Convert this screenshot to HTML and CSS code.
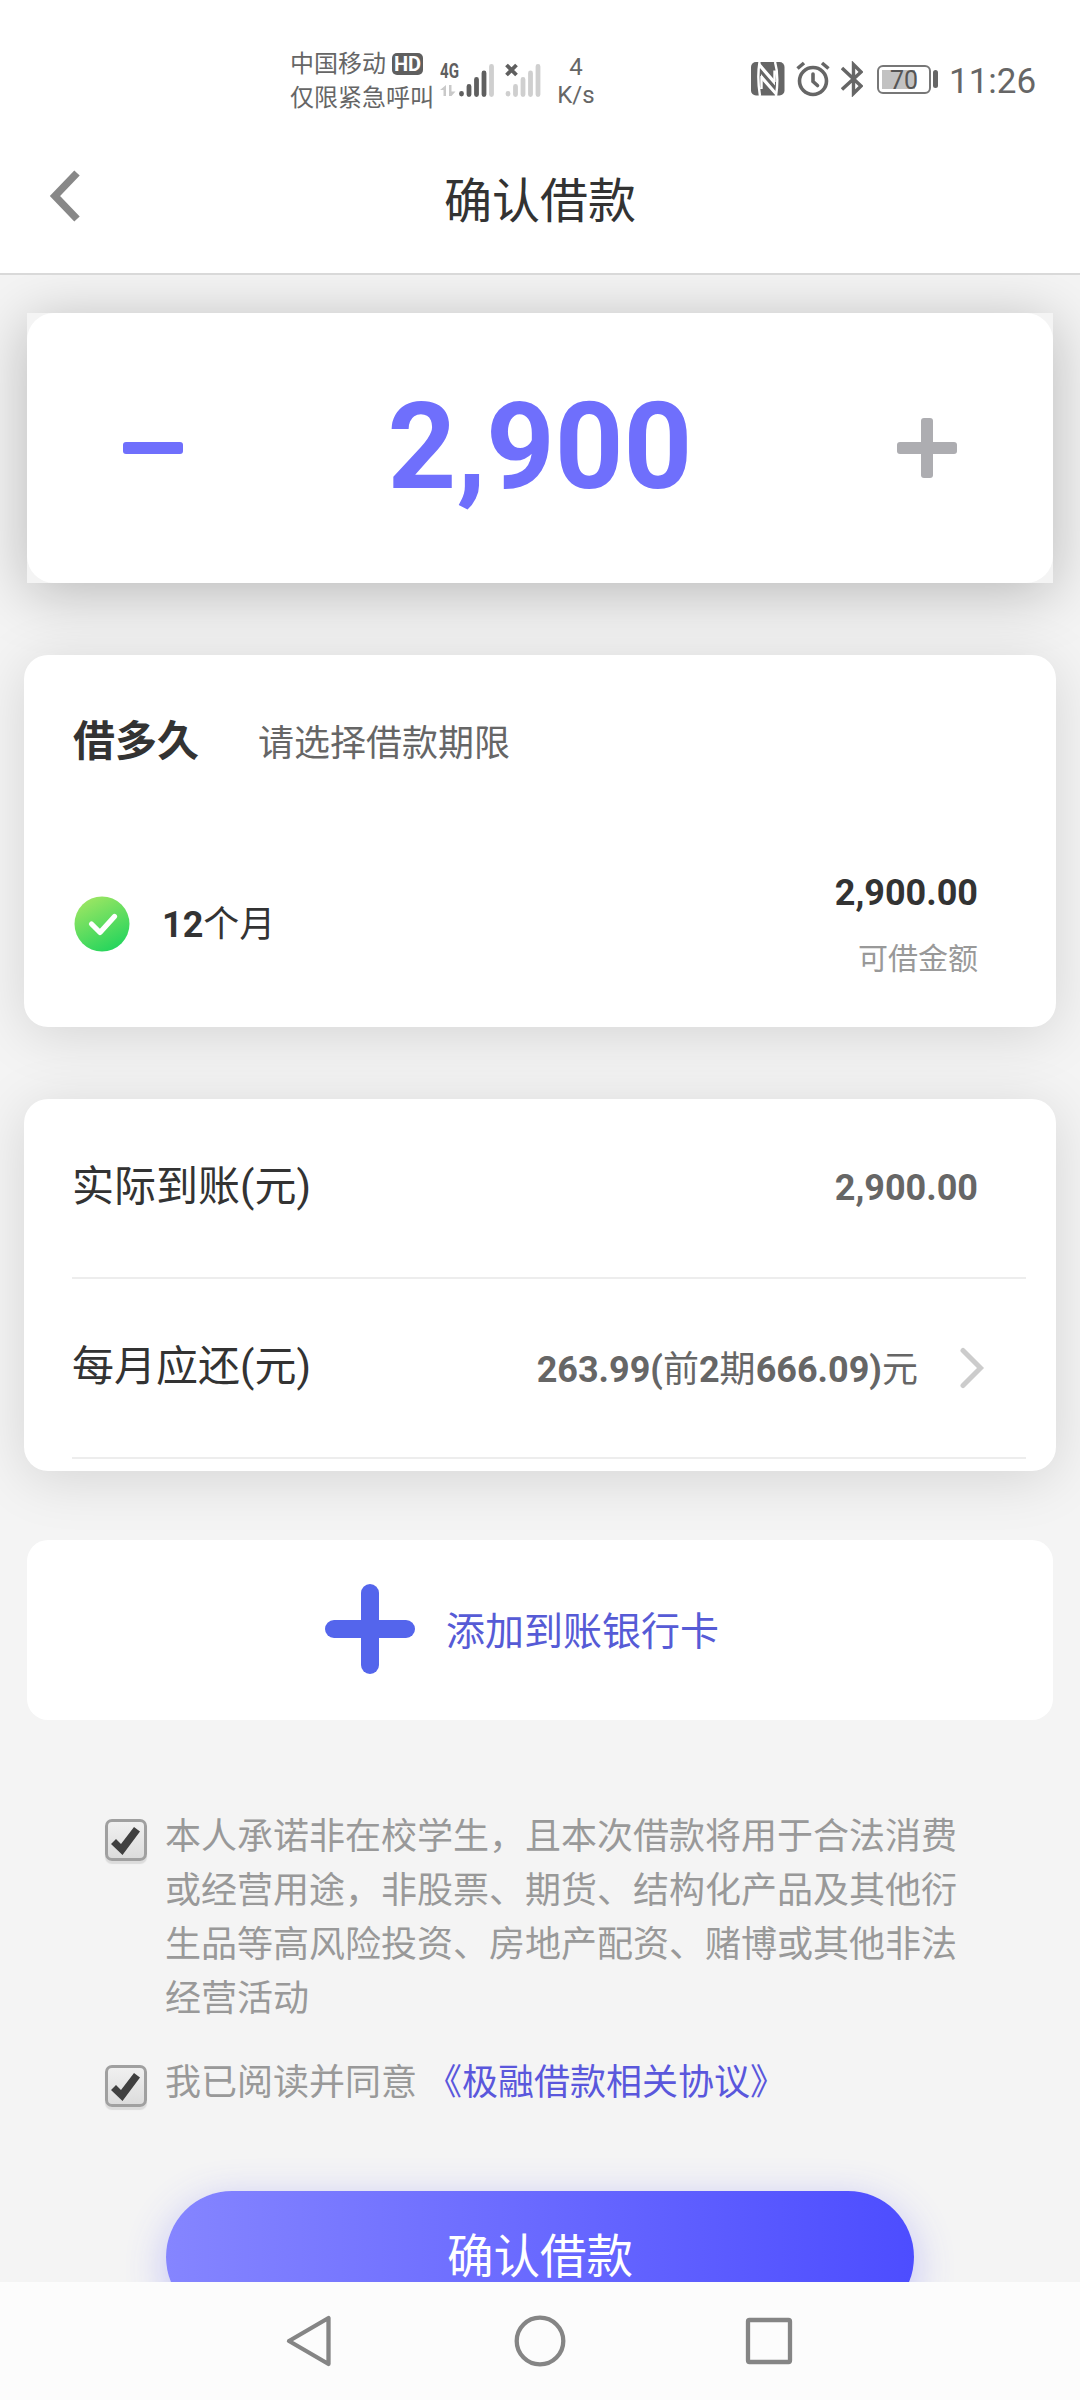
FILE: index.html
```html
<!DOCTYPE html>
<html lang="zh-CN">
<head>
<meta charset="utf-8">
<title>确认借款</title>
<link rel="stylesheet" href="styles.css">
</head>
<body>
<div class="screen">
  <header class="top">
    <div class="status">
      <div class="carrier">
        <div class="carrier-line">中国移动<span class="hd">HD</span></div>
        <div class="carrier-line">仅限紧急呼叫</div>
      </div>
      <svg class="signal" width="102" height="36" viewBox="0 0 102 36">
        <g fill="none" stroke-linecap="round" stroke-width="4.8">
          <path stroke="#5f5f5f" d="M21.500 31.500v.5M29 24.500v8M36.500 17.500v15M44 11v21.500"/>
          <path stroke="#cfcfcf" d="M51.500 4.500v28M68 31.500v.5M75.500 24.500v8M83 17.500v15M90.500 11v21.500M98 4.500v28"/>
        </g>
        <path stroke="#5f5f5f" stroke-width="3.800" fill="none" d="M66.500 3l10 10M76.500 3l-10 10"/>
        <path fill="#c9c9c9" d="M6 23v11H3.500v-6H0zM9 23v11h2.500l4-4.500h-4V23z"/>
        <text class="net" x="0" y="16" textLength="19" lengthAdjust="spacingAndGlyphs">4G</text>
      </svg>
      <div class="speed"><span>4</span><span>K/s</span></div>
      <div class="status-right">
        <svg width="34" height="34" viewBox="0 0 34 34">
          <rect width="33.500" height="33.500" rx="5" fill="#666"/>
          <path fill="none" stroke="#fff" stroke-width="2.400" d="M9 34C7 22 6.500 12 8.500 0M23.500 20V8.500M10.500 14v13M24 0c3 10 2.500 24 1 34"/>
          <path fill="#fff" d="M8 0l16 18.500v5L8.500 5.500zM10 12l15 17.500V34L10 17z"/>
        </svg>
        <svg width="34" height="36" viewBox="0 0 34 36" fill="none" stroke="#666" stroke-width="3.600">
          <circle cx="17" cy="20" r="13.500"/><path stroke-linecap="round" d="M17 13v7.500l4.500 4"/>
          <path d="M1.500 7.500L8 2M32.500 7.500L26 2"/>
        </svg>
        <svg width="22" height="36" viewBox="0 0 22 36" fill="none" stroke="#666" stroke-width="3.400">
          <path d="M1 7l19 18-7.500 7.500V3.500L20 11 1 28.500"/>
        </svg>
        <div class="battery"><span class="level"></span><span class="percent">70</span></div>
        <span class="nub"></span>
        <span class="clock">11:26</span>
      </div>
    </div>
    <div class="bar">
      <svg class="back" width="36" height="52" viewBox="0 0 36 52"><path fill="none" stroke="#888" stroke-width="7.500" d="M30 3L8 26l22 23"/></svg>
      <h1>确认借款</h1>
    </div>
  </header>

  <main class="content">
    <div class="amount-wrap">
      <section class="amount">
        <svg width="60" height="60" viewBox="0 0 60 60"><rect y="24" width="60" height="12" rx="3" fill="#6f6ffc"/></svg>
        <strong>2,900</strong>
        <svg width="60" height="60" viewBox="0 0 60 60" fill="#adadb1"><rect y="24" width="60" height="12" rx="3"/><rect x="24" width="12" height="60" rx="3"/></svg>
      </section>
    </div>

    <section class="card term">
      <div class="term-head"><h2>借多久</h2><p>请选择借款期限</p></div>
      <div class="term-option">
        <svg width="60" height="60" viewBox="0 0 60 60">
          <defs><linearGradient id="green" x1="0.250" y1="0" x2="0.750" y2="1"><stop offset="0" stop-color="#9ee663"/><stop offset="1" stop-color="#20d45c"/></linearGradient></defs>
          <circle cx="30" cy="30" r="27.500" fill="url(#green)"/>
          <path d="M19.500 30l8.500 8.500L42.500 22.500" fill="none" stroke="#fff" stroke-width="5.200" stroke-linecap="round" stroke-linejoin="round"/>
        </svg>
        <span class="months"><b>12</b>个月</span>
        <div class="limit"><b>2,900.00</b><small>可借金额</small></div>
      </div>
    </section>

    <section class="card detail">
      <div class="row"><span class="label">实际到账(元)</span><span class="value"><b>2,900.00</b></span></div>
      <div class="row"><span class="label">每月应还(元)</span><span class="value monthly"><b>263.99(</b>前<b>2</b>期<b>666.09)</b>元</span>
        <svg class="more" width="26" height="42" viewBox="0 0 26 42"><path d="M4 3.500l17.500 17.500L4 38.500" fill="none" stroke="#ccc" stroke-width="5" stroke-linecap="round"/></svg>
      </div>
    </section>

    <section class="bank">
      <svg width="90" height="90" viewBox="0 0 90 90" fill="#5465ec"><rect y="36" width="90" height="18" rx="9"/><rect x="36" width="18" height="90" rx="9"/></svg>
      <span>添加到账银行卡</span>
    </section>

    <div class="agree">
      <span class="check"><svg width="32" height="32" viewBox="0 0 32 32"><path d="M1 20l5-5 5 5L24 3l6 4.500L12.500 31z" fill="#404040"/></svg></span>
      <p>本人承诺非在校学生，且本次借款将用于合法消费或经营用途，非股票、期货、结构化产品及其他衍生品等高风险投资、房地产配资、赌博或其他非法经营活动</p>
    </div>
    <div class="agree second">
      <span class="check"><svg width="32" height="32" viewBox="0 0 32 32"><path d="M1 20l5-5 5 5L24 3l6 4.500L12.500 31z" fill="#404040"/></svg></span>
      <p>我已阅读并同意 <a>《极融借款相关协议》</a></p>
    </div>
    <div class="submit">确认借款</div>
  </main>

  <nav class="nav">
    <svg width="54" height="54" viewBox="0 0 54 54"><path d="M44.500 4v46L5 27z"/></svg>
    <svg width="54" height="54" viewBox="0 0 54 54"><circle cx="27" cy="27" r="23.300"/></svg>
    <svg width="54" height="54" viewBox="0 0 54 54"><rect x="6" y="6" width="42" height="42" rx="1.500"/></svg>
  </nav>
</div>
</body>
</html>
```
FILE: styles.css
```css
* { box-sizing: border-box; margin: 0; padding: 0; }
body { font-family: Roboto, "Noto Sans CJK SC", sans-serif; color: #333; }
svg { display: block; flex: none; }
.screen { width: 1080px; height: 2400px; display: flex; flex-direction: column; background: #f4f4f4; overflow: hidden; }

.top { height: 275px; flex: none; background: #fff; border-bottom: 2px solid #d9d9d9; }
.status { height: 130px; padding: 46px 42px 0 290px; display: flex; color: #666; }
.carrier { width: 150px; padding-top: 1px; font-size: 24px; font-weight: 400; line-height: 34px; white-space: nowrap; }
.carrier-line { display: flex; align-items: center; }
.hd { margin-left: 6px; width: 31px; height: 22px; border-radius: 5px; background: #5f5f5f; color: #fff; font: 700 20px/22px Roboto, sans-serif; text-align: center; }
.signal { margin-top: 16px; overflow: visible; }
.net { font: 700 21px Roboto, sans-serif; fill: #5f5f5f; }
.speed { width: 64px; margin-left: 2px; padding-top: 7px; display: flex; flex-direction: column; align-items: center; font: 24px/28px Roboto, sans-serif; }
.status-right { margin-left: auto; height: 66px; display: flex; align-items: center; }
.status-right svg + svg { margin-left: 11px; }
.battery { margin-left: 14px; width: 54px; height: 29px; border: 2px solid #777; border-radius: 6px; padding: 3px; position: relative; }
.level { display: block; width: 33px; height: 19px; background: #c2c2c2; }
.percent { position: absolute; inset: 0; text-align: center; font: 25px/27px Roboto, sans-serif; color: #555; }
.nub { width: 5px; height: 18px; margin-left: 2px; border-radius: 3px; background: #666; }
.clock { margin-left: 11px; padding-top: 5px; width: 89px; font: 35px/40px Roboto, sans-serif; white-space: nowrap; }
.bar { height: 143px; display: grid; grid-template-columns: 132px 1fr 132px; align-items: start; }
.back { margin: 40px 0 0 47px; }
.bar h1 { padding-top: 37px; font-size: 48px; line-height: 70px; font-weight: 400; text-align: center; }

.content { flex: 1; min-height: 0; overflow: hidden; padding: 38px 24px 0; }
.amount-wrap { margin: 0 3px; background: #f4f4f4; box-shadow: 0 9px 56px rgba(0, 0, 0, .25); }
.amount { height: 270px; padding: 0 96px; border-radius: 27px; background: #fff; display: flex; align-items: center; justify-content: space-between; }
.amount strong { padding-bottom: 2px; font-size: 120px; line-height: 140px; font-weight: 700; color: #6f6ffc; }
.card { border-radius: 24px; background: #fff; box-shadow: 0 8px 56px rgba(0, 0, 0, .13); }
.term { margin-top: 72px; height: 372px; padding: 52px 78px 0 49px; }
.term-head { display: flex; align-items: baseline; }
.term-head h2 { width: 185px; font-size: 42px; line-height: 70px; font-weight: 700; }
.term-head p { font-size: 36px; line-height: 60px; color: #666; }
.term-option { margin: 83px 0 0 -1px; display: flex; align-items: center; height: 128px; }
.months { margin-left: 30px; padding-top: 1px; font-size: 36px; line-height: 52px; }
.limit { margin-left: auto; padding-top: 9px; display: flex; flex-direction: column; align-items: flex-end; }
.limit b { font-size: 36px; line-height: 60px; }
.limit small { font-size: 30px; line-height: 72px; color: #999; }

.detail { margin-top: 72px; height: 372px; padding: 0 30px 0 48px; }
.row { height: 180px; padding: 0 48px 2px 0; display: flex; align-items: center; border-bottom: 2px solid #ededed; }
.label { font-size: 42px; line-height: 60px; }
.value { margin-left: auto; padding-top: 2px; font-size: 36px; line-height: 52px; color: #666; }
.monthly { padding-top: 5px; }
.more { margin: 2px -7px 0 41px; }

.bank { margin: 69px 3px 0; height: 180px; padding: 0 0 2px 298px; border-radius: 21px; background: #fff; display: flex; align-items: center; gap: 31px; font-size: 39px; color: #565bd6; }
.bank span { padding-bottom: 3px; }

.agree { margin: 90px 80px 0 81px; display: flex; align-items: flex-start; gap: 18px; color: #999; font-size: 36px; line-height: 54px; }
.agree p { width: 795px; }
.agree a { color: #5a57dc; }
.agree.second { margin-top: 30px; }
.check { flex: none; margin-top: 9px; width: 42px; height: 42px; border: 3px solid #a0a0a0; border-radius: 7px; background: linear-gradient(#f0f0f0, #dcdcdc); box-shadow: 0 3px 1px #dcdcdc; padding: 2px; }
.submit { margin: 81px 142px 0; height: 132px; border-radius: 66px; background: linear-gradient(90deg, #8585ff, #4d4dff); box-shadow: 0 10px 40px rgba(77, 77, 255, .3); color: #fff; font-size: 46.500px; line-height: 133px; text-align: center; }

.nav { flex: none; height: 118px; background: #fcfcfc; display: flex; justify-content: center; gap: 175px; padding-top: 32px; }
.nav svg { fill: none; stroke: #858585; stroke-width: 4.300; stroke-linejoin: round; }
```
